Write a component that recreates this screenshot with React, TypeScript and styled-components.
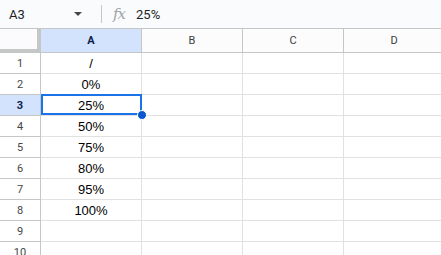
import React from 'react'
import styled, { createGlobalStyle } from 'styled-components'

const GlobalStyle = createGlobalStyle`
  body {
    margin: 0;
    background: #ffffff;
    font-family: Roboto, 'Liberation Sans', Arial, sans-serif;
  }
`

const COLUMNS = ['A', 'B', 'C', 'D']
const VALUES = ['/', '0%', '25%', '50%', '75%', '80%', '95%', '100%', '', '']
const ACTIVE_ROW = 3
const ACTIVE_COL = 'A'

const Sheet = styled.div`
  width: 441px;
  height: 255px;
  overflow: hidden;
  background: #ffffff;
`

const FormulaBar = styled.div`
  display: flex;
  align-items: center;
  height: 28px;
  background: #f9fbfd;
  color: #1f1f1f;
  font-size: 13px;
`

const NameBox = styled.div`
  display: flex;
  align-items: center;
  justify-content: space-between;
  width: 92px;
  padding: 0 10px 0 9px;
  box-sizing: border-box;
  font-family: Roboto, sans-serif;
`

const Caret = styled.span`
  width: 0;
  height: 0;
  border-left: 4px solid transparent;
  border-right: 4px solid transparent;
  border-top: 4px solid #444746;
`

const Divider = styled.div`
  width: 1px;
  height: 18px;
  margin: 0 11px 0 9px;
  background: #c7c7c7;
`

const Fx = styled.span`
  font-family: 'DejaVu Serif', 'Liberation Serif', serif;
  font-style: italic;
  font-size: 15px;
  color: #a0a3a6;
  letter-spacing: -1px;
  margin-right: 11px;
`

const Grid = styled.div`
  display: grid;
  grid-template-columns: 41px repeat(4, 101px);
  grid-template-rows: 24px;
  grid-auto-rows: 21px;
  border-top: 1px solid #c4c7c5;
`

const Corner = styled.div`
  box-sizing: border-box;
  background: #fbfbfd;
  border-right: 4px solid #c4c7c5;
  border-bottom: 4px solid #c4c7c5;
`

const ColHeader = styled.div<{ $active: boolean }>`
  box-sizing: border-box;
  display: flex;
  align-items: center;
  justify-content: center;
  font-family: Roboto, sans-serif;
  font-size: 11px;
  font-weight: ${(p) => (p.$active ? 700 : 400)};
  color: ${(p) => (p.$active ? '#0b1f4d' : '#3c4043')};
  background: ${(p) => (p.$active ? '#d3e3fd' : '#fbfcfb')};
  border-right: 1px solid #c4c7c5;
  border-bottom: 1px solid #c4c7c5;
`

const RowHeader = styled.div<{ $active: boolean }>`
  box-sizing: border-box;
  display: flex;
  align-items: center;
  justify-content: center;
  font-family: Roboto, sans-serif;
  font-size: 11px;
  font-weight: ${(p) => (p.$active ? 700 : 400)};
  color: ${(p) => (p.$active ? '#0b1f4d' : '#444746')};
  background: ${(p) => (p.$active ? '#d3e3fd' : '#ffffff')};
  border-right: 1px solid #c4c7c5;
  border-bottom: 1px solid #c4c7c5;
`

const Cell = styled.div`
  position: relative;
  box-sizing: border-box;
  display: flex;
  align-items: center;
  justify-content: center;
  font-family: 'Liberation Sans', Arial, sans-serif;
  font-size: 13px;
  color: #000000;
  border-right: 1px solid #e1e1e1;
  border-bottom: 1px solid #e1e1e1;
`

const Selection = styled.div`
  position: absolute;
  top: -1px;
  left: 0;
  width: 101px;
  height: 21px;
  box-sizing: border-box;
  border: 2px solid #1a73e8;
  z-index: 2;
`

const Handle = styled.div`
  position: absolute;
  right: -7px;
  bottom: -7px;
  width: 8px;
  height: 8px;
  border-radius: 50%;
  background: #0b57d0;
  border: 1px solid #ffffff;
`

export default function App() {
  return (
    <Sheet>
      <GlobalStyle />
      <FormulaBar>
        <NameBox>
          <span>A3</span>
          <Caret />
        </NameBox>
        <Divider />
        <Fx>fx</Fx>
        <span>25%</span>
      </FormulaBar>
      <Grid>
        <Corner />
        {COLUMNS.map((c) => (
          <ColHeader key={c} $active={c === ACTIVE_COL}>
            {c}
          </ColHeader>
        ))}
        {VALUES.map((v, i) => {
          const row = i + 1
          return (
            <React.Fragment key={row}>
              <RowHeader $active={row === ACTIVE_ROW}>{row}</RowHeader>
              {COLUMNS.map((c) => (
                <Cell key={c}>
                  {c === 'A' ? v : ''}
                  {c === ACTIVE_COL && row === ACTIVE_ROW && (
                    <Selection>
                      <Handle />
                    </Selection>
                  )}
                </Cell>
              ))}
            </React.Fragment>
          )
        })}
      </Grid>
    </Sheet>
  )
}
